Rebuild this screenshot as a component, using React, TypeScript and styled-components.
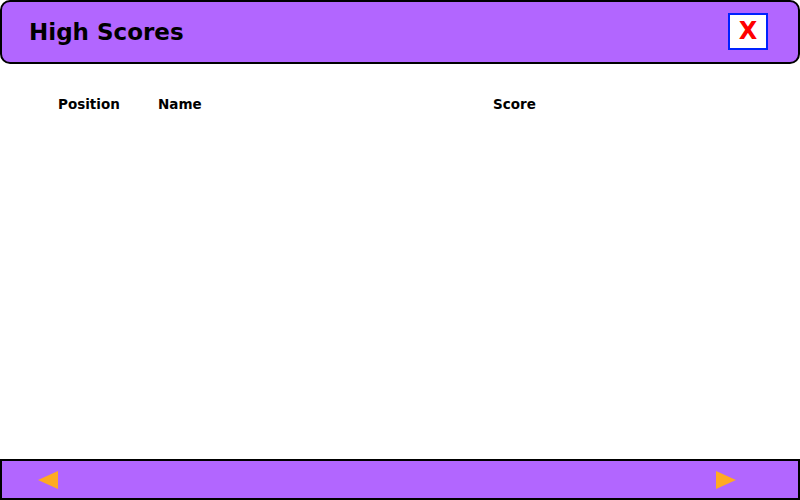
import React from "react";
import styled, { createGlobalStyle } from "styled-components";

const Global = createGlobalStyle`
  html, body { margin: 0; padding: 0; background: #ffffff; }
  body { font-family: "Comic Sans MS", "DejaVu Sans", sans-serif; }
`;

const Page = styled.div`
  width: 800px;
  height: 500px;
  display: flex;
  flex-direction: column;
  box-sizing: border-box;
`;

const Header = styled.header`
  height: 64px;
  box-sizing: border-box;
  background: #b266ff;
  border: 2px solid #000;
  border-radius: 10px;
  display: flex;
  align-items: center;
  justify-content: space-between;
  padding: 0 30px 0 27px;
`;

const Title = styled.h1`
  margin: 0;
  font-size: 23px;
  font-weight: bold;
  color: #000;
`;

const CloseButton = styled.button`
  width: 40px;
  height: 37px;
  box-sizing: border-box;
  background: #fff;
  border: 2px solid #0022ff;
  color: #ff0000;
  font-family: "DejaVu Sans", sans-serif;
  font-weight: bold;
  font-size: 24px;
  padding: 0;
  display: flex;
  align-items: center;
  justify-content: center;
  margin-top: -2px;
`;

const Main = styled.main`
  flex: 1;
  padding: 32px 0 0 58px;
`;

const HeadRow = styled.div`
  display: grid;
  grid-template-columns: 100px 335px 100px;
  font-size: 13.5px;
  font-weight: bold;
  color: #000;
`;

const Footer = styled.footer`
  height: 41px;
  box-sizing: border-box;
  background: #b266ff;
  border: 2px solid #000;
  display: flex;
  align-items: center;
  justify-content: space-between;
  padding: 0 61px 0 35px;
`;

const Arrow = ({ dir }: { dir: "left" | "right" }) => (
  <svg width="22" height="20" viewBox="0 0 22 20">
    {dir === "left" ? (
      <polygon points="1,10 21,1 21,19" fill="#ffaa22" />
    ) : (
      <polygon points="1,1 21,10 1,19" fill="#ffaa22" />
    )}
  </svg>
);

export default function App() {
  return (
    <Page>
      <Global />
      <Header>
        <Title>High Scores</Title>
        <CloseButton>X</CloseButton>
      </Header>
      <Main>
        <HeadRow>
          <span>Position</span>
          <span>Name</span>
          <span>Score</span>
        </HeadRow>
      </Main>
      <Footer>
        <Arrow dir="left" />
        <Arrow dir="right" />
      </Footer>
    </Page>
  );
}
